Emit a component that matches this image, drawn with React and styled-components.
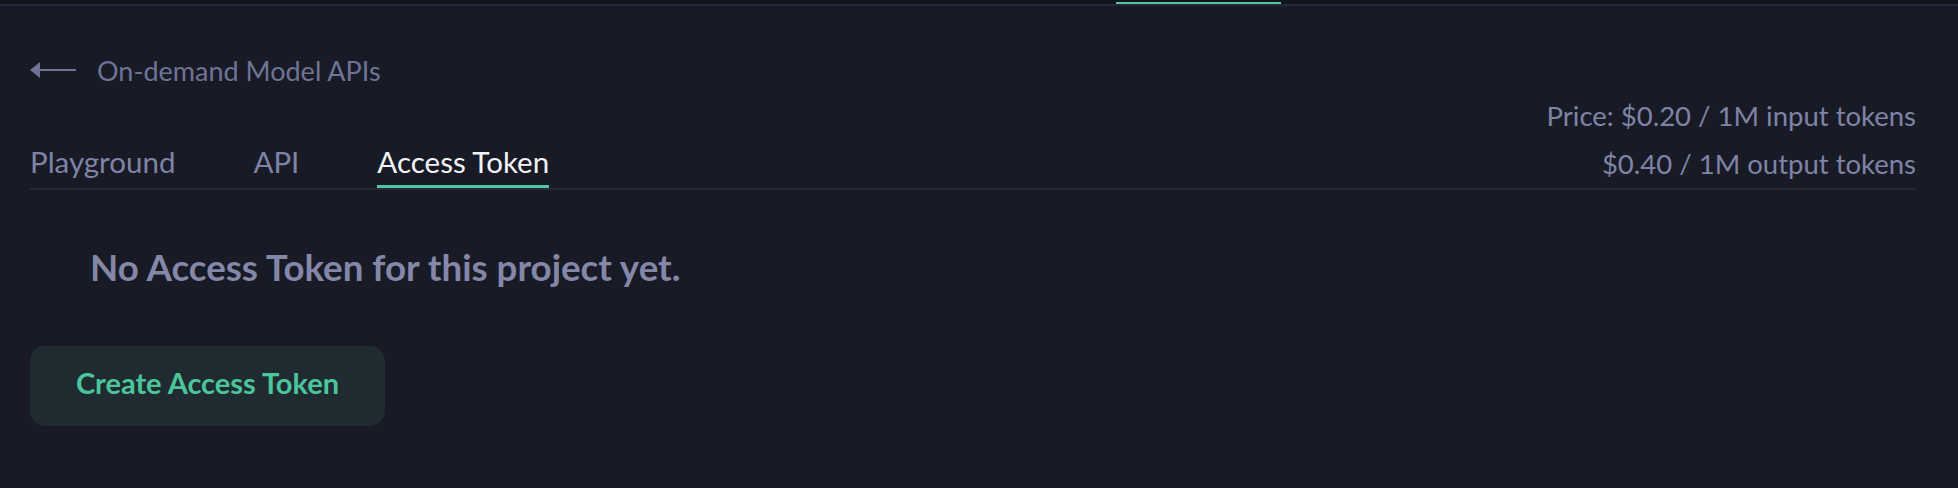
import React from 'react';
import styled, { createGlobalStyle } from 'styled-components';

const GlobalStyle = createGlobalStyle`
  html, body {
    margin: 0;
    padding: 0;
    background: #181b25;
  }
  body {
    font-family: Lato, "Noto Sans", sans-serif;
    -webkit-font-smoothing: antialiased;
  }
`;

/* ----------------- Top strip ----------------- */

const TopStrip = styled.div`
  height: 4px;
  background: #12141b;
  border-bottom: 2px solid #262839;
  display: flex;
  align-items: flex-start;
`;

const NavIndicator = styled.div`
  margin-left: 1116px;
  margin-top: 2px;
  width: 165px;
  height: 2px;
  background: #4fc7a0;
`;

/* ----------------- Page ----------------- */

const Page = styled.main`
  padding: 50px 42px 0 30px;
`;

const BackLink = styled.a`
  display: flex;
  align-items: center;
  gap: 21px;
  height: 28px;
  color: #6f7396;
  font-size: 27px;
  font-weight: 400;
  text-decoration: none;
  cursor: pointer;
`;

const Header = styled.div`
  display: flex;
  justify-content: space-between;
  align-items: flex-end;
  margin-top: 8px;
  border-bottom: 2px solid #262839;
`;

const Tabs = styled.nav`
  display: flex;
  gap: 78px;
`;

const Tab = styled.button`
  background: none;
  border: none;
  padding: 0 0 5px;
  font-family: inherit;
  font-size: 29.5px;
  line-height: 36px;
  font-weight: 400;
  color: ${(p) => (p.$active ? '#f2f3f8' : '#7f83a6')};
  border-bottom: 3px solid ${(p) => (p.$active ? '#4fc7a0' : 'transparent')};
  cursor: pointer;
`;

const PriceBlock = styled.div`
  text-align: right;
  color: #7f83a6;
  font-size: 27.5px;
  line-height: 48px;
`;

const EmptyTitle = styled.h2`
  margin: 55px 0 0 60px;
  font-size: 36.7px;
  line-height: 44px;
  font-weight: 700;
  color: #8487a8;
`;

const CreateButton = styled.button`
  margin-top: 57px;
  width: 355px;
  height: 80px;
  padding: 0 0 8px;
  border: none;
  border-radius: 15px;
  background: #1f2a31;
  color: #4cc59b;
  font-family: inherit;
  font-size: 29px;
  font-weight: 700;
  cursor: pointer;
`;

function BackArrow() {
  return (
    <svg width="46" height="16" viewBox="0 0 46 16" fill="none">
      <path d="M0 8 L10 0 L10 16 Z" fill="#6f7396" />
      <rect x="9" y="7" width="37" height="2" fill="#6f7396" />
    </svg>
  );
}

export default function App() {
  return (
    <>
      <GlobalStyle />
      <TopStrip>
        <NavIndicator />
      </TopStrip>
      <Page>
        <BackLink>
          <BackArrow />
          On-demand Model APIs
        </BackLink>
        <Header>
          <Tabs>
            <Tab>Playground</Tab>
            <Tab>API</Tab>
            <Tab $active>Access Token</Tab>
          </Tabs>
          <PriceBlock>
            <div>Price: $0.20 / 1M input tokens</div>
            <div>$0.40 / 1M output tokens</div>
          </PriceBlock>
        </Header>
        <EmptyTitle>No Access Token for this project yet.</EmptyTitle>
        <CreateButton>Create Access Token</CreateButton>
      </Page>
    </>
  );
}
